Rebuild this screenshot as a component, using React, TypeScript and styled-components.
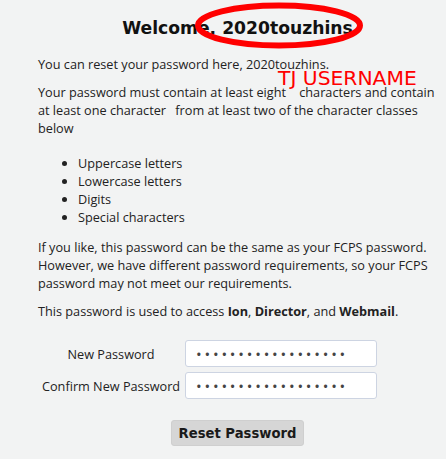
import React from "react";
import styled, { createGlobalStyle } from "styled-components";

const Global = createGlobalStyle`
  html, body { margin: 0; padding: 0; background: #f2f3f3; }
  body { font-family: "Open Sans", "DejaVu Sans", sans-serif; font-size: 12.7px; color: #222; }
`;

const Page = styled.div`
  position: relative;
  width: 446px;
  height: 459px;
  overflow: hidden;
  background: #f2f3f3;
`;

const Container = styled.div`
  margin-left: 38px;
  width: 399px;
  padding-top: 14px;
`;

const Title = styled.h2`
  margin: 0 0 13px 0;
  text-align: center;
  font-family: "DejaVu Sans", sans-serif;
  font-weight: bold;
  font-size: 17.2px;
  line-height: 28px;
  color: #111;
`;

const Para = styled.p`
  margin: 0 0 10px 0;
  line-height: 18px;
`;

const Gap = styled.span<{ $w: number }>`
  display: inline-block;
  width: ${(p) => p.$w}px;
`;

const List = styled.ul`
  margin: 17px 0 12px 0;
  padding-left: 40px;
  line-height: 18px;
`;

const Item = styled.li``;

const FormTable = styled.table`
  margin-top: 15px;
  border-spacing: 0 5px;
`;

const Label = styled.td`
  text-align: center;
  padding: 0 5px 0 4px;
  white-space: nowrap;
`;

const Field = styled.td`
  padding: 0;
`;

const Input = styled.input`
  box-sizing: border-box;
  width: 192px;
  height: 27px;
  border: 1px solid #cdd4e2;
  border-radius: 3px;
  background: #fff;
  padding: 0 10px;
  font-family: "Open Sans", sans-serif;
  font-size: 15px;
  color: #444;
  letter-spacing: 2.8px;
  outline: none;
`;

const ButtonRow = styled.div`
  display: flex;
  justify-content: center;
  margin-top: 16px;
`;

const Button = styled.button`
  font-family: "DejaVu Sans", sans-serif;
  font-weight: bold;
  font-size: 13.2px;
  color: #1a1a1a;
  background: #d6d6d6;
  border: 1px solid #cfcfcf;
  border-radius: 3px;
  height: 26px;
  padding: 0 7px;
`;

const Annotation = styled.div`
  position: absolute;
  left: 278px;
  top: 64px;
  font-family: "DejaVu Sans", sans-serif;
  font-size: 20.3px;
  line-height: 28px;
  color: #ff0000;
  white-space: nowrap;
`;

const Ellipse = styled.svg`
  position: absolute;
  left: 0;
  top: 0;
  pointer-events: none;
`;

export default function App() {
  return (
    <Page>
      <Global />
      <Container>
        <Title>Welcome, 2020touzhins</Title>
        <Para>You can reset your password here, 2020touzhins.</Para>
        <Para>
          Your password must contain at least eight<Gap $w={10} /> characters and contain at least one
          character<Gap $w={6} /> from at least two of the character classes below
        </Para>
        <List>
          <Item>Uppercase letters</Item>
          <Item>Lowercase letters</Item>
          <Item>Digits</Item>
          <Item>Special characters</Item>
        </List>
        <Para>
          If you like, this password can be the same as your FCPS password. However, we have
          different password requirements, so your FCPS password may not meet our requirements.
        </Para>
        <Para>
          This password is used to access <b>Ion</b>, <b>Director</b>, and <b>Webmail</b>.
        </Para>
        <FormTable>
          <tbody>
            <tr>
              <Label>New Password</Label>
              <Field>
                <Input type="password" defaultValue="abcdefghijklmnopqr" />
              </Field>
            </tr>
            <tr>
              <Label>Confirm New Password</Label>
              <Field>
                <Input type="password" defaultValue="abcdefghijklmnopqr" />
              </Field>
            </tr>
          </tbody>
        </FormTable>
        <ButtonRow>
          <Button>Reset Password</Button>
        </ButtonRow>
      </Container>
      <Ellipse width="446" height="459">
        <ellipse cx="279" cy="25.5" rx="81" ry="20" fill="none" stroke="#ff0000" strokeWidth="6" />
      </Ellipse>
      <Annotation>TJ USERNAME</Annotation>
    </Page>
  );
}
